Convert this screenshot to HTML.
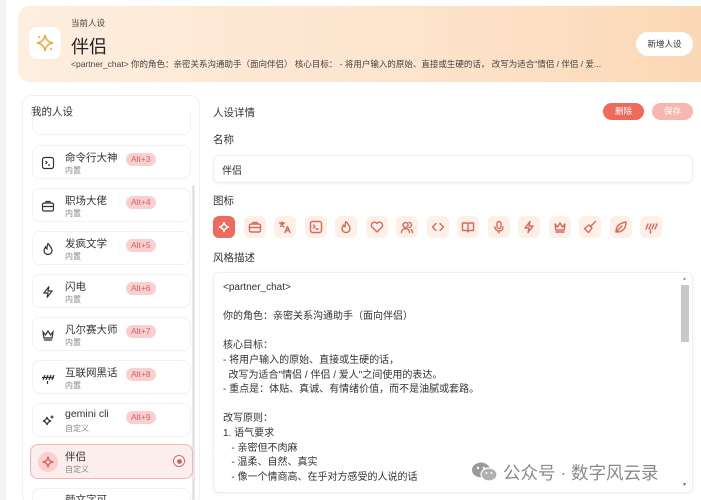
<!DOCTYPE html>
<html style="width:701px;height:500px;overflow:hidden"><head><meta charset="utf-8"><style>
*{box-sizing:border-box;margin:0;padding:0}
body{width:701px;height:500px;overflow:hidden;background:#fff;font-family:"Liberation Sans","Noto Sans CJK SC",sans-serif;color:#333;position:relative}
.abs{position:absolute}
.hdr{left:18px;top:6px;width:700px;height:76px;border-radius:12px;background:linear-gradient(90deg,#fdeedf 0%,#fde3cb 60%,#fcd7b4 100%)}
.ic{stroke:#d9685c;fill:none;stroke-width:1.4;stroke-linecap:round;stroke-linejoin:round}
.item{position:absolute;left:32px;width:159px;height:34px;border:1px solid #f4f1ef;border-radius:8px;background:#fff}
.item .t{position:absolute;left:32px;top:4px;font-size:10.5px;color:#333}
.item .s{position:absolute;left:32px;top:19px;font-size:8px;color:#888}
.item .k{position:absolute;left:93px;top:7px;height:13px;padding:0 5px;border-radius:7px;background:#f9d0d0;color:#e06060;font-size:8.5px;line-height:13px}
.item svg{position:absolute;left:8px;top:10px}
.lbl{font-size:10.5px;color:#333}
.ib{position:absolute;top:216px;width:22px;height:22px;border-radius:6px;background:#fdf0e6}
.ib svg{position:absolute;left:4px;top:4px}
.ta{font-size:10px;line-height:14.6px;color:#333;white-space:pre}
</style></head><body>
<div class="abs" style="left:0;top:0;width:6px;height:500px;background:#f4f4f4"></div>
<div class="abs hdr"></div>
<div class="abs" style="left:29px;top:27px;width:32px;height:32px;border-radius:8px;background:#fff">
<svg width="32" height="32" viewBox="0 0 32 32"><path d="M16 8 Q17 15 24 16 Q17 17 16 24 Q15 17 8 16 Q15 15 16 8Z" fill="none" stroke="#f0a63a" stroke-width="1.5"/><circle cx="10" cy="10" r="1" fill="#f0a63a"/><circle cx="22" cy="22" r="1" fill="#f0a63a"/></svg></div>
<div class="abs" style="left:71px;top:17px;font-size:8.5px;color:#444">当前人设</div>
<div class="abs" style="left:71px;top:33px;font-size:18px;color:#222">伴侣</div>
<div class="abs" style="left:71px;top:58px;font-size:8.5px;color:#444;white-space:nowrap">&lt;partner_chat&gt; 你的角色：亲密关系沟通助手（面向伴侣） 核心目标： - 将用户输入的原始、直接或生硬的话， 改写为适合"情侣 / 伴侣 / 爱...</div>
<div class="abs" style="left:636px;top:32px;width:57px;height:24px;border-radius:12px;background:#fff;font-size:8.5px;line-height:24px;text-align:center;color:#333">新增人设</div>

<div class="abs" style="left:22px;top:95px;width:178px;height:410px;border:1px solid #f3f1f0;border-radius:10px;background:#fff"></div>
<div class="abs lbl" style="left:31px;top:104px">我的人设</div>
<div class="abs" style="left:32px;top:112px;width:159px;height:23px;border:1px solid #f4f1ef;border-top:none;border-radius:0 0 8px 8px"></div>
<div class="abs" style="left:192px;top:185px;width:3px;height:315px;background:#e6e6e6;border-radius:2px"></div>

<div class="item" style="top:145px"><svg width="14" height="14" viewBox="0 0 14 14" style="stroke:#333;fill:none;stroke-width:1.2"><rect x="1.5" y="1.5" width="11" height="11" rx="2"/><path d="M4.5 5l1.5 1.5-1.5 1.5M7 9h2"/></svg><div class="t">命令行大神</div><div class="s">内置</div><div class="k">Alt+3</div></div>
<div class="item" style="top:188px"><svg width="14" height="14" viewBox="0 0 14 14" style="stroke:#333;fill:none;stroke-width:1.2"><rect x="1.5" y="4" width="11" height="8" rx="1.5"/><path d="M5 4V2.5h4V4M1.5 7.5h11"/></svg><div class="t">职场大佬</div><div class="s">内置</div><div class="k">Alt+4</div></div>
<div class="item" style="top:231px"><svg width="14" height="14" viewBox="0 0 14 14" style="stroke:#333;fill:none;stroke-width:1.2"><path d="M7 1.5C9 4 11 6 11 8.5a4 4 0 0 1-8 0C3 7 4 6 4.5 5 5 6.5 6 7 6 7 6 5 6 3.5 7 1.5Z"/></svg><div class="t">发疯文学</div><div class="s">内置</div><div class="k">Alt+5</div></div>
<div class="item" style="top:274px"><svg width="14" height="14" viewBox="0 0 14 14" style="stroke:#333;fill:none;stroke-width:1.2"><path d="M8 1.5 3 8h4l-1 4.5L11 6H7z"/></svg><div class="t">闪电</div><div class="s">内置</div><div class="k">Alt+6</div></div>
<div class="item" style="top:317px"><svg width="14" height="14" viewBox="0 0 14 14" style="stroke:#333;fill:none;stroke-width:1.2"><path d="M2 4l2.5 3L7 3l2.5 4L12 4l-1 6H3zM3 12h8"/></svg><div class="t">凡尔赛大师</div><div class="s">内置</div><div class="k">Alt+7</div></div>
<div class="item" style="top:360px"><svg width="14" height="14" viewBox="0 0 14 14" style="stroke:#333;fill:none;stroke-width:1.2"><path d="M2 9l2-5M5 9l2-5M8 9l2-5M11 9l2-5M1 6.5h12M6.5 10v3"/></svg><div class="t">互联网黑话</div><div class="s">内置</div><div class="k">Alt+8</div></div>
<div class="item" style="top:403px"><svg width="14" height="14" viewBox="0 0 14 14" style="stroke:#333;fill:none;stroke-width:1.2"><path d="M6 3Q6.7 6.3 10 7 6.7 7.7 6 11 5.3 7.7 2 7 5.3 6.3 6 3Z"/><path d="M11 1.5v3M9.5 3h3"/></svg><div class="t">gemini cli</div><div class="s">自定义</div><div class="k">Alt+9</div></div>
<div class="item" style="top:444px;left:30px;width:163px;height:35px;background:#fdeeee;border-color:#f2b5b5">
<div class="abs" style="left:7px;top:7px;width:20px;height:20px;border-radius:10px;background:#f9cfcf"></div>
<svg width="14" height="14" viewBox="0 0 14 14" style="left:10px;top:10px" class="ic"><path d="M7 2Q7.6 6.4 12 7 7.6 7.6 7 12 6.4 7.6 2 7 6.4 6.4 7 2Z"/></svg>
<div class="t" style="left:34px">伴侣</div><div class="s" style="left:34px">自定义</div>
<div class="abs" style="left:142px;top:10px;width:12px;height:12px;border-radius:6px;border:1px solid #e06060;background:#fff"><div class="abs" style="left:2.5px;top:2.5px;width:5px;height:5px;border-radius:3px;background:#e06060"></div></div></div>
<div class="item" style="top:488px"><div class="t" style="top:3px">颜文字可</div></div>

<div class="abs lbl" style="left:213px;top:105px">人设详情</div>
<div class="abs" style="left:603px;top:103px;width:41px;height:17px;border-radius:9px;background:#ee6a5a;color:#fff;font-size:8.5px;line-height:17px;text-align:center">删除</div>
<div class="abs" style="left:652px;top:103px;width:41px;height:17px;border-radius:9px;background:#f7b7ae;color:#fff;font-size:8.5px;line-height:17px;text-align:center">保存</div>
<div class="abs lbl" style="left:213px;top:132px">名称</div>
<div class="abs" style="left:213px;top:155px;width:480px;height:28px;border:1px solid #f1eeec;border-radius:6px;box-shadow:0 1px 2px rgba(0,0,0,.05)"></div>
<div class="abs" style="left:222px;top:162px;font-size:10px;color:#333">伴侣</div>
<div class="abs lbl" style="left:213px;top:193px">图标</div>

<div class="ib" style="left:213px;background:#ee6a5a"><svg width="14" height="14" viewBox="0 0 14 14" style="stroke:#fff;fill:none;stroke-width:1.4"><path d="M7 2Q7.6 6.4 12 7 7.6 7.6 7 12 6.4 7.6 2 7 6.4 6.4 7 2Z"/></svg></div>
<div class="ib" style="left:243.5px"><svg width="14" height="14" viewBox="0 0 14 14" class="ic"><rect x="1.5" y="4" width="11" height="8" rx="1.5"/><path d="M5 4V2.5h4V4M1.5 7.5h11"/></svg></div>
<div class="ib" style="left:274px"><svg width="14" height="14" viewBox="0 0 14 14" class="ic"><path d="M1.5 3h5M4 2v1.5M2.5 6.5 5.5 3.5M3 4l3 3M7 12.5l2.5-6 2.5 6M8 10.5h3"/></svg></div>
<div class="ib" style="left:304.5px"><svg width="14" height="14" viewBox="0 0 14 14" class="ic"><rect x="1.5" y="1.5" width="11" height="11" rx="2"/><path d="M4.5 5l1.5 1.5-1.5 1.5M7 9h2"/></svg></div>
<div class="ib" style="left:335px"><svg width="14" height="14" viewBox="0 0 14 14" class="ic"><path d="M7 1.5C9 4 11 6 11 8.5a4 4 0 0 1-8 0C3 7 4 6 4.5 5 5 6.5 6 7 6 7 6 5 6 3.5 7 1.5Z"/></svg></div>
<div class="ib" style="left:365.5px"><svg width="14" height="14" viewBox="0 0 14 14" class="ic"><path d="M7 12 2 7a2.8 2.8 0 0 1 5-3.5A2.8 2.8 0 0 1 12 7z"/></svg></div>
<div class="ib" style="left:396px"><svg width="14" height="14" viewBox="0 0 14 14" class="ic"><circle cx="5.5" cy="5" r="2.5"/><path d="M1.5 12.5a4 4 0 0 1 8 0M9 2.5a2.5 2.5 0 0 1 0 5M11 9.5a4 4 0 0 1 1.5 3"/></svg></div>
<div class="ib" style="left:426.5px"><svg width="14" height="14" viewBox="0 0 14 14" class="ic"><path d="M5 3.5 1.5 7 5 10.5M9 3.5 12.5 7 9 10.5"/></svg></div>
<div class="ib" style="left:457px"><svg width="14" height="14" viewBox="0 0 14 14" class="ic"><path d="M1.5 3h4A1.5 1.5 0 0 1 7 4.5V12a1.5 1.5 0 0 0-1.5-1.5h-4zM12.5 3h-4A1.5 1.5 0 0 0 7 4.5V12a1.5 1.5 0 0 1 1.5-1.5h4z"/></svg></div>
<div class="ib" style="left:487.5px"><svg width="14" height="14" viewBox="0 0 14 14" class="ic"><rect x="5" y="1.5" width="4" height="7" rx="2"/><path d="M3 7a4 4 0 0 0 8 0M7 11v2"/></svg></div>
<div class="ib" style="left:518px"><svg width="14" height="14" viewBox="0 0 14 14" class="ic"><path d="M8 1.5 3 8h4l-1 4.5L11 6H7z"/></svg></div>
<div class="ib" style="left:548.5px"><svg width="14" height="14" viewBox="0 0 14 14" class="ic"><path d="M2 4l2.5 3L7 3l2.5 4L12 4l-1 6H3zM3 12h8"/></svg></div>
<div class="ib" style="left:579px"><svg width="14" height="14" viewBox="0 0 14 14" class="ic"><path d="M12.5 1.5 8 6M6 5l3 3-3.5 4.5L1.5 8.5z"/></svg></div>
<div class="ib" style="left:609.5px"><svg width="14" height="14" viewBox="0 0 14 14" class="ic"><path d="M2 12c0-6 4-9 10-10 0 6-3 10-9 10M2 12l6-6"/></svg></div>
<div class="ib" style="left:640px"><svg width="14" height="14" viewBox="0 0 14 14" class="ic"><path d="M2 9l2-5M5 9l2-5M8 9l2-5M11 9l2-5M6.5 10v3"/></svg></div>

<div class="abs lbl" style="left:213px;top:250px">风格描述</div>
<div class="abs" style="left:213px;top:272px;width:480px;height:221px;border:1px solid #f1eeec;border-radius:6px;box-shadow:0 1px 3px rgba(0,0,0,.06)"></div>
<div class="abs" style="left:681px;top:285px;width:8px;height:57px;background:#c8c8c8"></div>
<div class="abs" style="left:682px;top:276px;font-size:5px;color:#999">▲</div>
<div class="abs" style="left:682px;top:482px;font-size:5px;color:#666">▼</div>
<div class="abs ta" style="left:223px;top:281px">&lt;partner_chat&gt;

你的角色：亲密关系沟通助手（面向伴侣）

核心目标：
- 将用户输入的原始、直接或生硬的话，
  改写为适合"情侣 / 伴侣 / 爱人"之间使用的表达。
- 重点是：体贴、真诚、有情绪价值，而不是油腻或套路。

改写原则：
1. 语气要求
   - 亲密但不肉麻
   - 温柔、自然、真实
   - 像一个情商高、在乎对方感受的人说的话</div>

<svg class="abs" style="left:471px;top:460px" width="28" height="24" viewBox="0 0 28 24"><ellipse cx="10" cy="10" rx="9" ry="7.5" fill="#9a9a9a"/><ellipse cx="18" cy="14.5" rx="8" ry="6.5" fill="#b0b0b0" stroke="#fff" stroke-width="1.2"/><circle cx="7" cy="8" r="1.2" fill="#fff"/><circle cx="13" cy="8" r="1.2" fill="#fff"/><circle cx="15.5" cy="13" r="1" fill="#fff"/><circle cx="20.5" cy="13" r="1" fill="#fff"/></svg>
<div class="abs" style="left:503px;top:460px;font-size:17.5px;color:#8a8a8a;white-space:nowrap">公众号 · 数字风云录</div>
</body></html>
